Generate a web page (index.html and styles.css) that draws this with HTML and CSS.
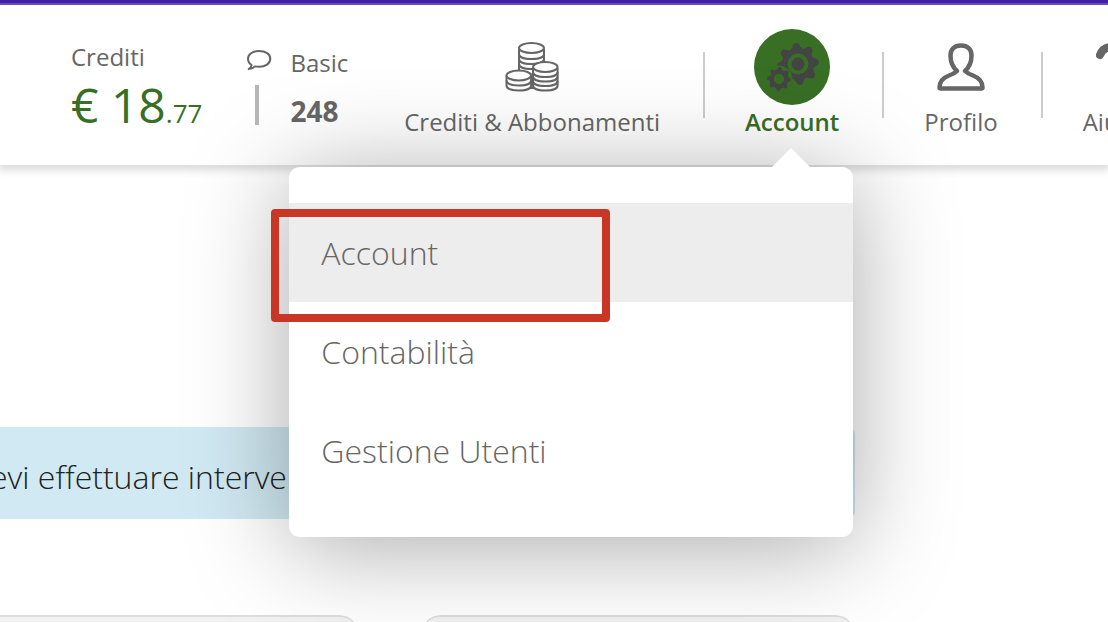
FILE: index.html
```html
<!DOCTYPE html>
<html lang="it">
<head>
    <meta charset="UTF-8">
    <meta name="viewport" content="width=device-width, initial-scale=1.0">
    <title>Account</title>
    <link rel="stylesheet" href="styles.css">
</head>
<body>
    <header class="header">
        <div class="credits">
            <div class="credits-label">Crediti</div>
            <div class="credits-value">€ 18<span class="cents">.77</span></div>
        </div>

        <div class="plan">
            <div class="plan-icon">
                <svg width="26" height="22" viewBox="0 0 26 22" fill="none" stroke="#666" stroke-width="2" stroke-linejoin="round">
                    <path d="M13 2C6.500 2 2 5.300 2 9.800c0 2.700 1.400 4.800 3.600 6.200C5.400 17.800 4.500 19.100 2.800 20c2.400 0 4.400-.8 6-2.600 1.300.3 2.700.4 4.200.4 6.600 0 11.300-3.300 11.300-8S19.600 2 13 2z"/>
                </svg>
                <span class="plan-bar"></span>
            </div>
            <div>
                <div class="plan-name">Basic</div>
                <div class="plan-count">248</div>
            </div>
        </div>

        <nav>
            <ul class="nav">
                <li class="nav-item">
                    <a href="#" class="nav-link">
                        <span class="nav-icon">
                            <svg width="54" height="50" viewBox="0 0 54 50" fill="#fff" stroke="#666" stroke-width="2">
                                <!-- back stack -->
                                <path d="M14 7v34c0 3 5 5 12.500 5S39 44 39 41V7"/>
                                <path fill="none" d="M14 12c0 3 5 5 12.500 5S39 15 39 12M14 17c0 3 5 5 12.500 5S39 20 39 17M14 22c0 3 5 5 12.500 5S39 25 39 22M14 27c0 3 5 5 12.500 5"/>
                                <ellipse cx="26.500" cy="6" rx="12.500" ry="5"/>
                                <!-- right stack -->
                                <path d="M28 26v17.500c0 3 5 5 12.300 5s12.300-2 12.300-5V26"/>
                                <path fill="none" d="M28 30c0 3 5 5 12.300 5s12.300-2 12.300-5M28 34.500c0 3 5 5 12.300 5s12.300-2 12.300-5M28 39c0 3 5 5 12.300 5s12.300-2 12.300-5"/>
                                <ellipse cx="40.300" cy="25" rx="12.300" ry="5"/>
                                <!-- left stack -->
                                <path d="M1.500 34v9.500c0 3 5 5 12.300 5s12.300-2 12.300-5V34"/>
                                <path fill="none" d="M1.500 38.500c0 3 5 5 12.300 5s12.300-2 12.300-5"/>
                                <ellipse cx="13.800" cy="33.500" rx="12.300" ry="5"/>
                            </svg>
                        </span>
                        Crediti &amp; Abbonamenti
                    </a>
                </li>
                <li class="divider"></li>
                <li class="nav-item">
                    <a href="#" class="nav-link active">
                        <span class="nav-icon">
                            <svg width="76" height="76" viewBox="0 0 76 76" fill="#444">
                                <defs>
                                    <path id="tooth" d="M-7-13-4-17Q-3-21 0-21T4-17L7-13z"/>
                                    <g id="teeth">
                                        <use href="#tooth"/>
                                        <use href="#tooth" transform="rotate(45)"/>
                                        <use href="#tooth" transform="rotate(90)"/>
                                        <use href="#tooth" transform="rotate(135)"/>
                                        <use href="#tooth" transform="rotate(180)"/>
                                        <use href="#tooth" transform="rotate(225)"/>
                                        <use href="#tooth" transform="rotate(270)"/>
                                        <use href="#tooth" transform="rotate(315)"/>
                                    </g>
                                </defs>
                                <circle cx="38" cy="38" r="38" fill="#396e25"/>
                                <g transform="translate(44 35) rotate(-6)">
                                    <use href="#teeth"/>
                                    <circle r="15.500"/>
                                    <circle r="8.500" fill="none" stroke="#396e25" stroke-width="4"/>
                                </g>
                                <circle cx="25" cy="50" r="13.500" fill="#396e25"/>
                                <g transform="translate(25 50) rotate(4) scale(.57)">
                                    <use href="#teeth"/>
                                    <circle r="16"/>
                                    <circle r="9" fill="#396e25"/>
                                </g>
                            </svg>
                        </span>
                        Account
                    </a>
                    <div class="dropdown">
                        <a href="#" class="dropdown-item selected">Account</a>
                        <a href="#" class="dropdown-item">Contabilità</a>
                        <a href="#" class="dropdown-item">Gestione Utenti</a>
                        <span class="highlight"></span>
                    </div>
                </li>
                <li class="divider"></li>
                <li class="nav-item">
                    <a href="#" class="nav-link">
                        <span class="nav-icon">
                            <svg width="48" height="48" viewBox="0 0 48 48" fill="none" stroke="#666" stroke-width="4.500" stroke-linejoin="round">
                                <path d="M24 2.500c-7 0-10.500 4-10.500 10 0 7 2 11.500 6.500 15.500-2 2-4 3-8 4.500-6.500 2.500-9.500 6.500-9.500 12q0 1 1.500 1h40q1.500 0 1.500-1c0-5.500-3-9.500-9.500-12-4-1.500-6-2.500-8-4.500 4.500-4 6.500-8.500 6.500-15.500 0-6-3.500-10-10.500-10z"/>
                            </svg>
                        </span>
                        Profilo
                    </a>
                </li>
                <li class="divider"></li>
                <li class="nav-item">
                    <a href="#" class="nav-link">
                        <span class="nav-icon">
                            <svg width="32" height="48" viewBox="0 0 32 48" fill="none" stroke="#666" stroke-width="8" stroke-linecap="round">
                                <path d="M4 12C6 7 10 4 16 4c7 0 12 4 12 10 0 8-12 9-12 19M16 43v.5"/>
                            </svg>
                        </span>
                        Aiuto
                    </a>
                </li>
            </ul>
        </nav>
    </header>

    <main class="content">
        <div class="alert">evi effettuare interve</div>
        <div class="cards">
            <div class="card"></div>
            <div class="card"></div>
        </div>
    </main>
</body>
</html>
```
FILE: styles.css
```css
* {
    margin: 0;
    padding: 0;
    box-sizing: border-box;
}

body {
    font-family: 'Open Sans', 'Noto Sans', sans-serif;
    font-size: 24px;
    line-height: 32px;
    background: #fff;
    color: #666;
    overflow: hidden;
    min-height: 100vh;
}

a {
    color: inherit;
    text-decoration: none;
}

svg {
    display: block;
}

/* Header */
.header {
    position: relative;
    z-index: 1;
    display: flex;
    align-items: flex-start;
    padding: 24px 0 27px 71px;
    border-top: 5px solid #6a4cb8;
    background: #fff;
    box-shadow: 0 3px 8px 2px rgba(0, 0, 0, 0.15);
    white-space: nowrap;
}

.header::before {
    content: '';
    position: absolute;
    top: -5px;
    left: 0;
    right: 0;
    height: 3px;
    background: #411fa6;
}

.credits {
    padding-top: 12px;
    margin-right: 44px;
}

.credits-value {
    margin-top: 4px;
    font-size: 48px;
    line-height: 56px;
    color: #396e25;
}

.cents {
    font-size: 26px;
    line-height: 1;
}

.plan {
    display: flex;
    gap: 18px;
    padding-top: 18px;
    margin-right: 16px;
}

.plan-icon {
    padding-top: 2px;
}

.plan-bar {
    display: block;
    width: 4px;
    height: 40px;
    margin: 14px 0 0 9px;
    background: #b8b8b8;
}

.plan-count {
    margin-top: 12px;
    font-size: 28px;
    font-weight: 700;
    line-height: 40px;
}

/* Navigation */
.nav {
    display: flex;
    list-style: none;
}

.nav-item {
    position: relative;
    padding: 0 43px 0 40px;
}

.nav-link {
    display: block;
    text-align: center;
}

.nav-link.active {
    color: #396e25;
    font-weight: 600;
}

.nav-icon {
    display: flex;
    align-items: center;
    justify-content: center;
    height: 76px;
    margin-bottom: 1px;
}

.divider {
    width: 2px;
    height: 66px;
    margin-top: 23px;
    background: #ccc;
}

/* Dropdown */
.dropdown {
    position: absolute;
    top: 138px;
    right: 29px;
    width: 564px;
    padding: 36px 0 37px;
    border-radius: 11px;
    background: #fff;
    box-shadow: 0 10px 100px rgba(0, 0, 0, 0.34);
}

.dropdown::before {
    content: '';
    position: absolute;
    top: -19px;
    right: 43px;
    border: 19px solid transparent;
    border-top: 0;
    border-bottom-color: #fff;
}

.dropdown-item {
    display: block;
    height: 99px;
    padding: 28px 32px;
    font-size: 32px;
    font-weight: 300;
    line-height: 44px;
}

.dropdown-item.selected {
    background: #ededed;
}

.highlight {
    position: absolute;
    top: 42px;
    left: -18px;
    width: 339px;
    height: 113px;
    border: 8px solid #ca3625;
    border-radius: 4px;
}

/* Page content, scrolled partly off to the left */
.content {
    margin: 262px 253px 0 -76px;
}

.alert {
    padding: 28px 66px 20px;
    border-radius: 8px;
    background: #d1e9f3;
    color: #222;
    font-size: 32px;
    font-weight: 300;
    line-height: 44px;
    white-space: nowrap;
}

.cards {
    display: grid;
    grid-template-columns: 1fr 1fr;
    gap: 62px;
    margin-top: 96px;
}

.card {
    height: 120px;
    border-top: 2px solid #ddd;
    border-radius: 20px;
    background: #f2f2f2;
}
```
